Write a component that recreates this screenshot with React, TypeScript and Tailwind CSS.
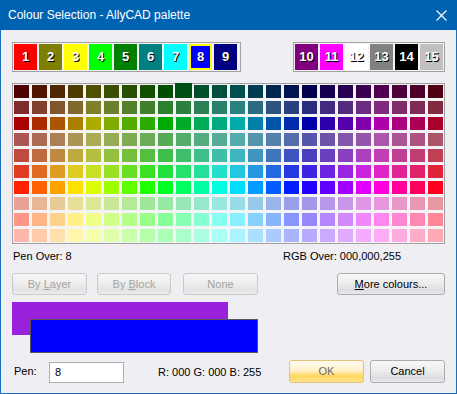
import React from 'react';

// HSV -> hex, used to build the 24 x 10 palette
function hsv(h: number, s: number, v: number) {
  const f = (n: number) => {
    const k = (n + h / 60) % 6;
    const c = v - v * s * Math.max(0, Math.min(k, 4 - k, 1));
    return Math.round(c * 255).toString(16).padStart(2, '0');
  };
  return `#${f(5)}${f(3)}${f(1)}`;
}

const rows = [
  { off: 0, s: 1, v: 0.31 },
  { off: 0, s: 0.66, v: 0.5 },
  { off: 0, s: 1, v: 0.67 },
  { off: 0, s: 0.5, v: 0.67 },
  { off: 5, s: 0.67, v: 0.75 },
  { off: 8, s: 0.84, v: 0.88 },
  { off: 8, s: 1, v: 1 },
  { off: 8, s: 0.35, v: 0.91 },
  { off: 8, s: 0.47, v: 1 },
  { off: 8, s: 0.33, v: 1 },
];

const penLeft = [
  { n: 1, c: '#ff0000' },
  { n: 2, c: '#808000' },
  { n: 3, c: '#ffff00' },
  { n: 4, c: '#00ff00' },
  { n: 5, c: '#008000' },
  { n: 6, c: '#008080' },
  { n: 7, c: '#00ffff' },
  { n: 8, c: '#0000ff' },
  { n: 9, c: '#000080' },
];

const penRight = [
  { n: 10, c: '#800080' },
  { n: 11, c: '#ff00ff' },
  { n: 12, c: '#ffffff' },
  { n: 13, c: '#808080' },
  { n: 14, c: '#000000' },
  { n: 15, c: '#c0c0c0' },
];

function Swatch({ n, c, selected }: { n: number; c: string; selected?: boolean }) {
  return (
    <div
      className={`w-[23px] h-[26px] flex items-center justify-center text-[13px] font-bold text-white [text-shadow:1px_1px_0_#000] ${
        selected ? 'border-2 border-[#ffff00]' : ''
      }`}
      style={{ backgroundColor: c }}
    >
      {n}
    </div>
  );
}

const btn =
  'h-[22px] flex items-center justify-center text-[11px] rounded-[3px] border';
const btnDisabled = `${btn} border-[#c9c9c9] text-[#a3a3a3] bg-[linear-gradient(to_bottom,#f6f6f6,#eeeeee_45%,#e2e2e2_80%,#ececec)]`;
const btnNormal = `${btn} border-[#acacac] text-black bg-[linear-gradient(to_bottom,#f7f7f7,#ededed_45%,#dadde2_80%,#e9e9e9)]`;

export default function App() {
  return (
    <div className="w-[457px] h-[394px] flex flex-col bg-[#eeeef3] border border-t-0 border-[#1c6fbf] font-['Liberation_Sans',Arial,sans-serif] text-black">
      {/* Title bar */}
      <div className="h-[30px] shrink-0 bg-[#0063b1] flex items-center justify-between pl-[8px] pr-[9px] -mx-px text-white text-[12px]">
        <span>Colour Selection - AllyCAD palette</span>
        <svg width="11" height="11" viewBox="0 0 11 11" className="mr-[1px]">
          <path d="M0.5 0.5L10.5 10.5M10.5 0.5L0.5 10.5" stroke="#fff" strokeWidth="1.1" />
        </svg>
      </div>

      <div className="flex flex-col px-[11px]">
        {/* Pen swatches */}
        <div className="flex justify-between mt-[12px]">
          <div className="flex gap-[2px] border border-[#a0a0a0] p-px pr-[3px] bg-[#f4f4f7]">
            {penLeft.map((p) => (
              <Swatch key={p.n} n={p.n} c={p.c} selected={p.n === 8} />
            ))}
          </div>
          <div className="flex gap-[2px] border border-[#a0a0a0] p-px bg-[#f4f4f7]">
            {penRight.map((p) => (
              <Swatch key={p.n} n={p.n} c={p.c} />
            ))}
          </div>
        </div>

        {/* Palette grid */}
        <div className="mt-[11px] border border-[#a0a0a0] p-px grid grid-cols-[repeat(24,15px)] auto-rows-[13px] gap-[3px] bg-[#f4f4f7]">
          {rows.map((r, ri) =>
            Array.from({ length: 24 }, (_, ci) => {
              const sel = ri === 0 && ci === 9;
              return (
                <div
                  key={`${ri}-${ci}`}
                  className={sel ? '-mx-px -mt-[2px]' : ''}
                  style={{ backgroundColor: hsv((ci * 15 + r.off) % 360, r.s, r.v) }}
                />
              );
            })
          )}
        </div>

        {/* Over info */}
        <div className="flex mt-[6px] text-[11px] leading-[13px]">
          <span className="w-[271px] pl-px">Pen Over: 8</span>
          <span>RGB Over: 000,000,255</span>
        </div>

        {/* Buttons */}
        <div className="flex mt-[10px]">
          <div className={`${btnDisabled} w-[75px]`}>
            <span>
              By <u>L</u>ayer
            </span>
          </div>
          <div className={`${btnDisabled} w-[74px] ml-[10px]`}>
            <span>
              By <u>B</u>lock
            </span>
          </div>
          <div className={`${btnDisabled} w-[75px] ml-[12px]`}>None</div>
          <div className={`${btnNormal} w-[108px] ml-auto`}>
            <span>
              <u>M</u>ore colours...
            </span>
          </div>
        </div>

        {/* Colour previews */}
        <div className="mt-[7px] flex flex-col">
          <div className="w-[216px] h-[33px] bg-[#9a21dc]" />
          <div className="relative w-[228px] h-[34px] ml-[18px] -mt-[16px] bg-[#0000ff] border border-[#555555]" />
        </div>

        {/* Bottom row */}
        <div className="flex items-center mt-[7px] h-[23px] text-[11px]">
          <span className="w-[37px] pl-[2px]">Pen:</span>
          <div className="w-[75px] h-[21px] mt-[2px] bg-white border border-[#abadb3] flex items-center pl-[5px]">8</div>
          <span className="ml-[34px] w-[131px] mt-[2px]">R: 000 G: 000 B: 255</span>
          <div className="h-[23px] w-[75px] flex items-center justify-center rounded-[3px] border border-[#e3c275] text-[#6d6d6d] bg-[linear-gradient(to_bottom,#fffcf2,#fff1c8_45%,#ffd75e_72%,#ffe48f)]">
            OK
          </div>
          <div className="h-[23px] w-[75px] ml-[6px] flex items-center justify-center rounded-[3px] border border-[#acacac] bg-[linear-gradient(to_bottom,#f7f7f7,#ededed_45%,#dadde2_80%,#e9e9e9)]">
            Cancel
          </div>
        </div>
      </div>
    </div>
  );
}
